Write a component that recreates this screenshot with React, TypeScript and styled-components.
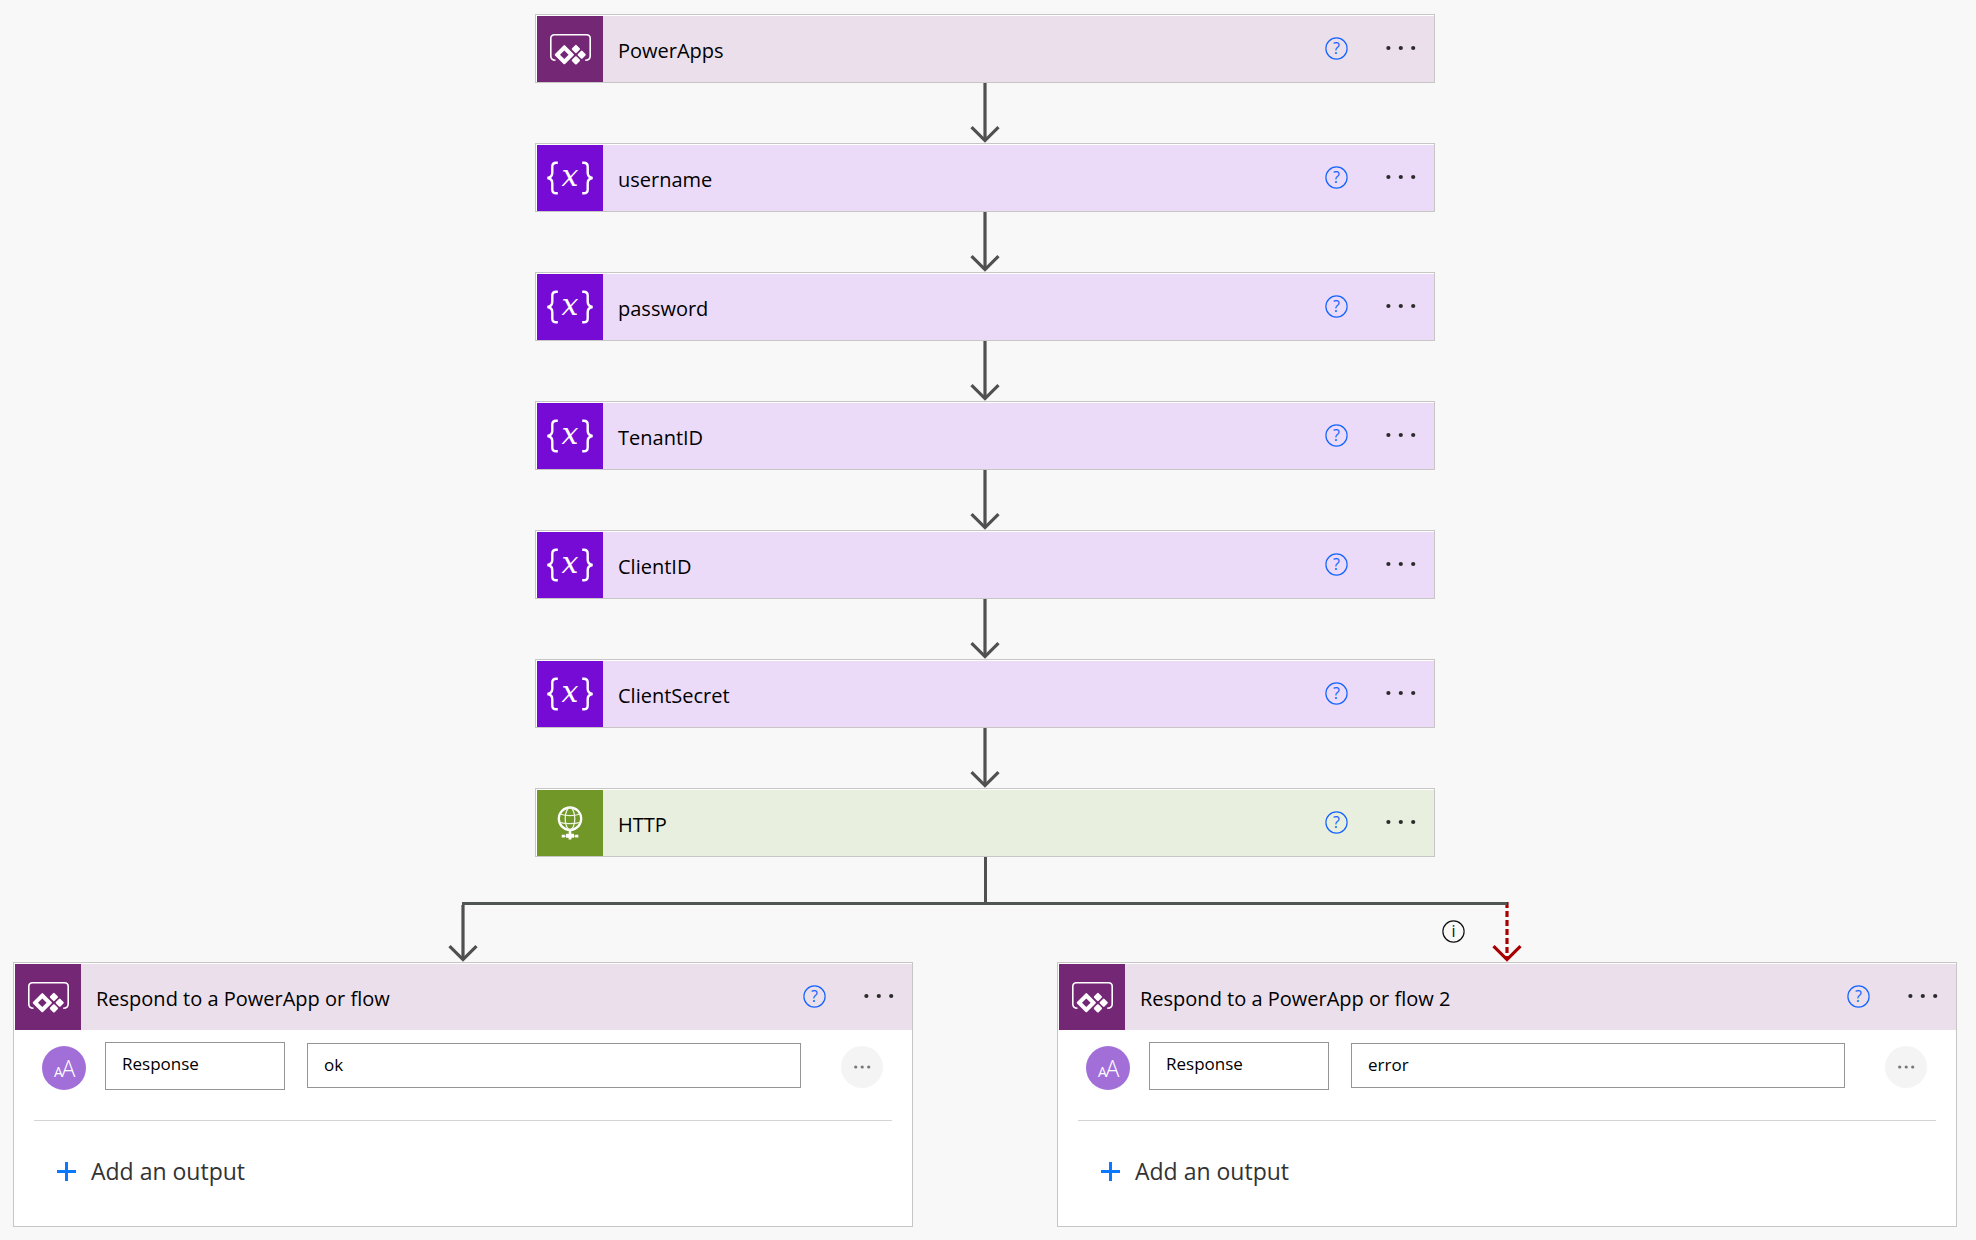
import React from "react";
import styled, { createGlobalStyle } from "styled-components";

const FONT = '"Open Sans", "Noto Sans", sans-serif';
const NARROW_FONT = '"Liberation Sans Narrow", "Open Sans", sans-serif';
const BRANCH_GAP = 144;

const GlobalStyle = createGlobalStyle`
  *, *::before, *::after { box-sizing: border-box; }
  body {
    margin: 0;
    background: #f8f8f8;
    font-family: ${FONT};
    color: #000;
  }
  button, input { font-family: inherit; }
`;

const Canvas = styled.main`
  display: flex;
  flex-direction: column;
  align-items: center;
  padding: 14px 19px 13px 13px;
`;

const Card = styled.section`
  width: 100%;
  max-width: 900px;
  padding: 1px 0 0 1px;
  border: 1px solid #c8c6c4;
  background: #fff;
`;

const Header = styled.header<{ $tint: string }>`
  display: flex;
  align-items: center;
  height: 66px;
  padding-right: 18px;
  background: ${(p) => p.$tint};
`;

const IconTile = styled.div<{ $color: string }>`
  flex: none;
  width: 66px;
  height: 66px;
  background: ${(p) => p.$color};

  svg { display: block; }
`;

const Title = styled.h2`
  flex: 1;
  min-width: 0;
  margin: 0;
  padding: 4px 15px 0;
  overflow: hidden;
  font-size: 20px;
  font-weight: 400;
  line-height: 28px;
  text-overflow: ellipsis;
  white-space: nowrap;
`;

const IconButton = styled.button`
  display: flex;
  flex: none;
  padding: 0;
  border: 0;
  background: none;
  cursor: pointer;
`;

const HeaderActions = styled.div`
  display: flex;
  flex: none;
  align-items: center;
  gap: 38px;
  padding-bottom: 2px;
`;

const Branches = styled.div`
  display: grid;
  grid-template-columns: repeat(2, minmax(0, 1fr));
  column-gap: ${BRANCH_GAP}px;
  width: 100%;
`;

const Branch = styled.div`
  display: flex;
  flex-direction: column;
  align-items: center;
`;

const Trunk = styled.div`
  width: 3px;
  height: 45px;
  background: #505050;
`;

const Crossbar = styled.div`
  position: relative;
  z-index: 1;
  align-self: stretch;
  height: 3px;
  margin: 0 calc((100% - ${BRANCH_GAP}px) / 4) 0 calc((100% - ${BRANCH_GAP}px) / 4 - 1px);
  background: #505452;
`;

const ConnectorRow = styled.div`
  display: grid;
  grid-template-columns: 1fr 30px 1fr;
  width: 100%;
  height: 57px;
`;

const InfoSlot = styled.div`
  display: flex;
  justify-content: flex-end;
  align-items: flex-start;
  padding: 15px 27px 0 0;
`;

const ArrowSvg = styled.svg`
  display: block;
  overflow: visible;
`;

const OutputRow = styled.div`
  display: flex;
  align-items: center;
  height: 60px;
  padding: 12px 29px 0 27px;
`;

const TypeBadge = styled.span`
  display: flex;
  flex: none;
  align-self: flex-end;
  margin-right: 19px;
`;

const NameInput = styled.input`
  flex: none;
  width: 180px;
  height: 48px;
  margin: 0 22px 0 0;
  padding: 0 16px 6px;
  border: 1px solid #979593;
  border-radius: 0;
  background: #fff;
  color: #000;
  font-size: 17px;
`;

const ValueInput = styled.input`
  flex: 1;
  min-width: 0;
  height: 45px;
  margin: 0 40px 2px 0;
  padding: 0 16px 2px;
  border: 1px solid #979593;
  border-radius: 0;
  background: #fff;
  color: #000;
  font-size: 17px;
`;

const RoundButton = styled(IconButton)`
  width: 42px;
  height: 42px;
  margin-top: 2px;
  align-items: center;
  justify-content: center;
  border-radius: 50%;
  background: #f4f4f4;
`;

const Divider = styled.hr`
  height: 1px;
  margin: 30px 20px 0 19px;
  border: 0;
  background: #d4d4d4;
`;

const AddBar = styled.div`
  padding: 33px 42px 38px;
`;

const AddButton = styled.button`
  display: flex;
  align-items: center;
  gap: 15px;
  height: 34px;
  padding: 0;
  border: 0;
  background: none;
  color: #333;
  font-size: 23px;
  line-height: 34px;
  cursor: pointer;
`;

const PowerAppsIcon = () => (
  <svg width="66" height="66" viewBox="0 0 66 66" fill="none" aria-hidden="true">
    <path
      d="M18.5 44.2C15.5 44.2 13.8 42.5 13.8 40V22.5C13.8 20 15.3 18.7 17.7 18.7H49.4C51.8 18.7 53.2 20 53.2 22.5V40C53.2 42.5 51.5 44.2 48.2 44.2"
      stroke="#fff"
      strokeWidth="1.6"
    />
    <path
      d="M27.3 30.2L35.8 38.7L27.3 47.2L18.8 38.7Z"
      fill="#fff"
      stroke="#fff"
      strokeWidth="2.2"
      strokeLinejoin="round"
    />
    <path d="M27.3 34.4L31.6 38.7L27.3 43L23 38.7Z" fill="#742774" />
    <g fill="#fff" stroke="#fff" strokeWidth="2.2" strokeLinejoin="round">
      <path d="M38.9 30L41.9 33L38.9 36L35.9 33Z" />
      <path d="M38.9 41.4L41.9 44.4L38.9 47.4L35.9 44.4Z" />
      <path d="M44.7 35.7L47.7 38.7L44.7 41.7L41.7 38.7Z" />
    </g>
  </svg>
);

const VariableIcon = () => (
  <svg width="66" height="66" viewBox="0 0 66 66" fill="none" aria-hidden="true">
    <g stroke="#fff" strokeWidth="2.4">
      <path d="M20.8 17.8H19.2C16.7 17.8 15.3 19.2 15.3 21.6V27.8C15.3 31 13.8 32.6 10.4 33C13.8 33.4 15.3 35 15.3 38.2V44.4C15.3 46.8 16.7 48.2 19.2 48.2H20.8" />
      <path d="M45.2 17.8H46.8C49.3 17.8 50.7 19.2 50.7 21.6V27.8C50.7 31 52.2 32.6 55.6 33C52.2 33.4 50.7 35 50.7 38.2V44.4C50.7 46.8 49.3 48.2 46.8 48.2H45.2" />
    </g>
    <text
      x="33"
      y="41"
      fill="#fff"
      fontFamily='"DejaVu Serif", serif'
      fontStyle="italic"
      fontSize="30"
      textAnchor="middle"
    >
      x
    </text>
  </svg>
);

const HttpIcon = () => (
  <svg width="66" height="66" viewBox="0 0 66 66" fill="none" aria-hidden="true">
    <circle cx="33" cy="28.7" r="11.2" stroke="#fff" strokeWidth="2.3" />
    <g stroke="#eef3e4" strokeWidth="1.3">
      <ellipse cx="33" cy="28.7" rx="4.8" ry="11" />
      <path d="M22.8 24C29 26 37 26 43.2 24" />
      <path d="M22.5 32.4C29 34 37 34 43.5 32.4" />
    </g>
    <path d="M33 40V44" stroke="#fff" strokeWidth="2.6" />
    <path d="M25 46.2H41" stroke="#e6eed8" strokeWidth="1" />
    <path d="M29 43.8H37V47.8H29ZM24.7 44.7H27.9V47.6H24.7ZM38.1 44.7H41.3V47.6H38.1ZM31.6 47.6H34.4V49.6H31.6Z" fill="#fff" />
  </svg>
);

const TextTypeIcon = () => (
  <svg width="44" height="44" viewBox="0 0 44 44" aria-hidden="true">
    <circle cx="22" cy="22" r="22" fill="#a26fd9" />
    <g fill="#fff" fontFamily={NARROW_FONT} textAnchor="middle">
      <text x="16.5" y="31" fontSize="14">A</text>
      <text x="26.3" y="31" fontSize="23" fontWeight="300">A</text>
    </g>
  </svg>
);

const CircleGlyph = ({ glyph, color }: { glyph: string; color: string }) => (
  <svg width="23" height="23" viewBox="0 0 23 23" aria-hidden="true">
    <circle cx="11.5" cy="11.5" r="10.6" fill="none" stroke={color} strokeWidth="1.2" />
    <text x="11.5" y="17" fill={color} fontFamily={FONT} fontSize="16" textAnchor="middle">
      {glyph}
    </text>
  </svg>
);

const HeaderDots = () => (
  <svg width="30" height="30" viewBox="0 0 30 30" fill="#2b2b2b" aria-hidden="true">
    <circle cx="2.4" cy="15" r="2.1" />
    <circle cx="14.8" cy="15" r="2.1" />
    <circle cx="27.2" cy="15" r="2.1" />
  </svg>
);

const RowDots = () => (
  <svg width="18" height="6" viewBox="0 0 18 6" fill="#777" aria-hidden="true">
    <circle cx="2.7" cy="3" r="1.6" />
    <circle cx="9.2" cy="3" r="1.6" />
    <circle cx="15.7" cy="3" r="1.6" />
  </svg>
);

const PlusIcon = () => (
  <svg width="19" height="19" viewBox="0 0 19 19" aria-hidden="true">
    <path d="M9.5 0V19M0 9.5H19" stroke="#0a78ff" strokeWidth="3" />
  </svg>
);

const Arrow = ({ height = 60, failed = false }: { height?: number; failed?: boolean }) => {
  const color = failed ? "#a80000" : "#505050";
  const tip = height - 2.4;
  return (
    <ArrowSvg width="30" height={height} fill="none" stroke={color} strokeWidth="3.2" aria-hidden="true">
      <path d={`M15 ${failed ? -3 : 0}V${tip}`} strokeDasharray={failed ? "6 3" : undefined} />
      <path d={`M1.5 ${tip - 13.5}L15 ${tip}L28.5 ${tip - 13.5}`} />
    </ArrowSvg>
  );
};

const kinds = {
  powerapps: { color: "#742774", tint: "#ebdfeb", Icon: PowerAppsIcon },
  variable: { color: "#770bd6", tint: "#ebdbf8", Icon: VariableIcon },
  http: { color: "#709727", tint: "#e9efdf", Icon: HttpIcon },
};

type Kind = keyof typeof kinds;

const StepHeader = ({ kind, title }: { kind: Kind; title: string }) => {
  const { color, tint, Icon } = kinds[kind];
  return (
    <Header $tint={tint}>
      <IconTile $color={color}>
        <Icon />
      </IconTile>
      <Title>{title}</Title>
      <HeaderActions>
        <IconButton type="button" aria-label={`Help for ${title}`}>
          <CircleGlyph glyph="?" color="#1464ff" />
        </IconButton>
        <IconButton type="button" aria-label={`Menu for ${title}`}>
          <HeaderDots />
        </IconButton>
      </HeaderActions>
    </Header>
  );
};

const ResponseCard = ({ title, value }: { title: string; value: string }) => (
  <Card>
    <StepHeader kind="powerapps" title={title} />
    <OutputRow>
      <TypeBadge>
        <TextTypeIcon />
      </TypeBadge>
      <NameInput aria-label="Output name" defaultValue="Response" />
      <ValueInput aria-label="Output value" defaultValue={value} />
      <RoundButton type="button" aria-label="Output options">
        <RowDots />
      </RoundButton>
    </OutputRow>
    <Divider />
    <AddBar>
      <AddButton type="button">
        <PlusIcon />
        Add an output
      </AddButton>
    </AddBar>
  </Card>
);

const steps: { kind: Kind; title: string }[] = [
  { kind: "powerapps", title: "PowerApps" },
  { kind: "variable", title: "username" },
  { kind: "variable", title: "password" },
  { kind: "variable", title: "TenantID" },
  { kind: "variable", title: "ClientID" },
  { kind: "variable", title: "ClientSecret" },
  { kind: "http", title: "HTTP" },
];

export default function App() {
  return (
    <>
      <GlobalStyle />
      <Canvas>
        {steps.map((step, i) => (
          <React.Fragment key={step.title}>
            {i > 0 && <Arrow />}
            <Card>
              <StepHeader kind={step.kind} title={step.title} />
            </Card>
          </React.Fragment>
        ))}
        <Trunk />
        <Crossbar />
        <Branches>
          <Branch>
            <Arrow height={57} />
            <ResponseCard title="Respond to a PowerApp or flow" value="ok" />
          </Branch>
          <Branch>
            <ConnectorRow>
              <InfoSlot>
                <IconButton type="button" aria-label="Run after details">
                  <CircleGlyph glyph="i" color="#111" />
                </IconButton>
              </InfoSlot>
              <Arrow height={57} failed />
            </ConnectorRow>
            <ResponseCard title="Respond to a PowerApp or flow 2" value="error" />
          </Branch>
        </Branches>
      </Canvas>
    </>
  );
}
